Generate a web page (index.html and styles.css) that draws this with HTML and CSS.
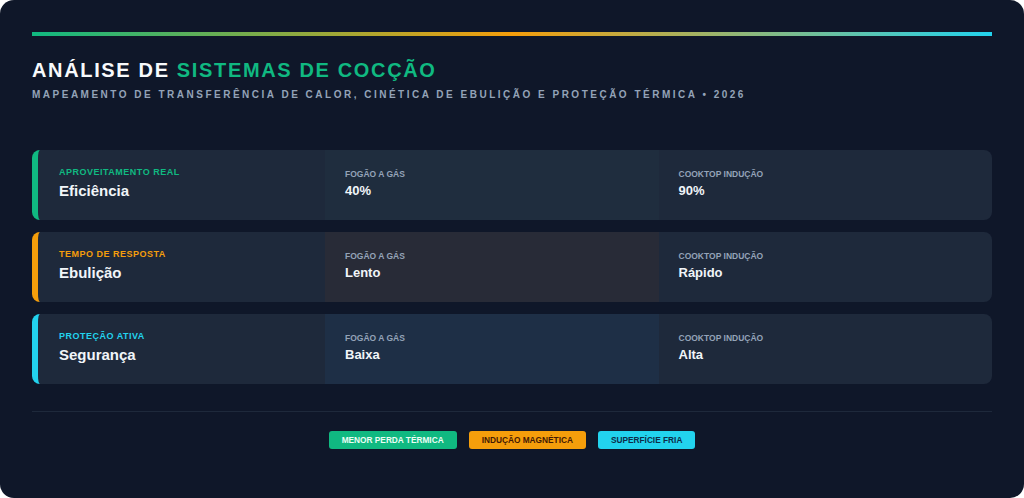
FILE: index.html
```html
<!DOCTYPE html>
<html lang="pt-BR">
<head>
<meta charset="utf-8">
<title>Análise de Sistemas de Cocção</title>
<link rel="stylesheet" href="styles.css">
</head>
<body>
<main class="page">
  <div class="accent-bar"></div>
  <h1 class="title">ANÁLISE DE <span class="title-hl">SISTEMAS DE COCÇÃO</span></h1>
  <p class="subtitle">MAPEAMENTO DE TRANSFERÊNCIA DE CALOR, CINÉTICA DE EBULIÇÃO E PROTEÇÃO TÉRMICA • 2026</p>

  <section class="rows">
    <div class="row row-green">
      <div class="cell cell-head">
        <div class="kicker">APROVEITAMENTO REAL</div>
        <div class="head">Eficiência</div>
      </div>
      <div class="cell cell-mid">
        <div class="clabel">FOGÃO A GÁS</div>
        <div class="cval">40%</div>
      </div>
      <div class="cell">
        <div class="clabel">COOKTOP INDUÇÃO</div>
        <div class="cval">90%</div>
      </div>
    </div>

    <div class="row row-amber">
      <div class="cell cell-head">
        <div class="kicker">TEMPO DE RESPOSTA</div>
        <div class="head">Ebulição</div>
      </div>
      <div class="cell cell-mid">
        <div class="clabel">FOGÃO A GÁS</div>
        <div class="cval">Lento</div>
      </div>
      <div class="cell">
        <div class="clabel">COOKTOP INDUÇÃO</div>
        <div class="cval">Rápido</div>
      </div>
    </div>

    <div class="row row-cyan">
      <div class="cell cell-head">
        <div class="kicker">PROTEÇÃO ATIVA</div>
        <div class="head">Segurança</div>
      </div>
      <div class="cell cell-mid">
        <div class="clabel">FOGÃO A GÁS</div>
        <div class="cval">Baixa</div>
      </div>
      <div class="cell">
        <div class="clabel">COOKTOP INDUÇÃO</div>
        <div class="cval">Alta</div>
      </div>
    </div>
  </section>

  <hr class="divider">

  <div class="tags">
    <span class="tag tag-green">MENOR PERDA TÉRMICA</span>
    <span class="tag tag-amber">INDUÇÃO MAGNÉTICA</span>
    <span class="tag tag-cyan">SUPERFÍCIE FRIA</span>
  </div>
</main>
</body>
</html>
```
FILE: styles.css
```css
* { box-sizing: border-box; }

html, body {
  margin: 0;
  padding: 0;
  background: #ffffff;
}

body {
  font-family: "Liberation Sans", Arial, Helvetica, sans-serif;
}

.page {
  width: 1024px;
  height: 498px;
  background: #0f1729;
  border-radius: 14px;
  padding: 32px 32px 0;
  overflow: hidden;
}

.accent-bar {
  height: 4px;
  background: linear-gradient(90deg, #10b981 0%, #f59e0b 50%, #22d3ee 100%);
}

.title {
  margin: 22px 0 0;
  font-size: 20px;
  line-height: 24px;
  font-weight: 700;
  letter-spacing: 1.65px;
  color: #f8fafc;
}

.title-hl { color: #10b981; }

.subtitle {
  margin: 6px 0 0;
  font-size: 10px;
  line-height: 14px;
  font-weight: 700;
  letter-spacing: 2.5px;
  color: #94a3b8;
}

.rows {
  margin-top: 48px;
  display: flex;
  flex-direction: column;
  gap: 12px;
}

.row {
  display: grid;
  grid-template-columns: 287px 1fr 1fr;
  height: 70px;
  background: #1e293b;
  border-radius: 8px;
  border-left: 6px solid #10b981;
  overflow: hidden;
}

.row-amber { border-left-color: #f59e0b; }
.row-cyan { border-left-color: #22d3ee; }

.cell {
  padding: 19px 20px 0;
}

.cell-head { padding: 17px 21px 0; }

.kicker {
  font-size: 9px;
  line-height: 11px;
  font-weight: 700;
  letter-spacing: 0.5px;
  color: #10b981;
}

.row-amber .kicker { color: #f59e0b; }
.row-cyan .kicker { color: #22d3ee; }

.head {
  margin-top: 4px;
  font-size: 15px;
  line-height: 18px;
  font-weight: 700;
  color: #f1f5f9;
}

.row-green .cell-mid { background: #1f2d3e; }
.row-amber .cell-mid { background: #282b37; }
.row-cyan .cell-mid { background: #1e2f46; }

.clabel {
  font-size: 8.5px;
  line-height: 11px;
  font-weight: 700;
  color: #94a3b8;
}

.cval {
  margin-top: 3px;
  font-size: 13px;
  line-height: 16px;
  font-weight: 700;
  color: #f1f5f9;
}

.divider {
  margin: 27px 0 0;
  border: 0;
  height: 1px;
  background: #1e293b;
}

.tags {
  margin-top: 19px;
  display: flex;
  justify-content: center;
  gap: 12px;
}

.tag {
  display: inline-block;
  height: 18px;
  padding: 4px 13px;
  font-size: 8.3px;
  line-height: 10px;
  font-weight: 700;
  border-radius: 3px;
}

.tag-green { background: #10b981; color: #ecfdf5; }
.tag-amber { background: #f59e0b; color: #451a03; }
.tag-cyan { background: #22d3ee; color: #0c2d48; }
```
